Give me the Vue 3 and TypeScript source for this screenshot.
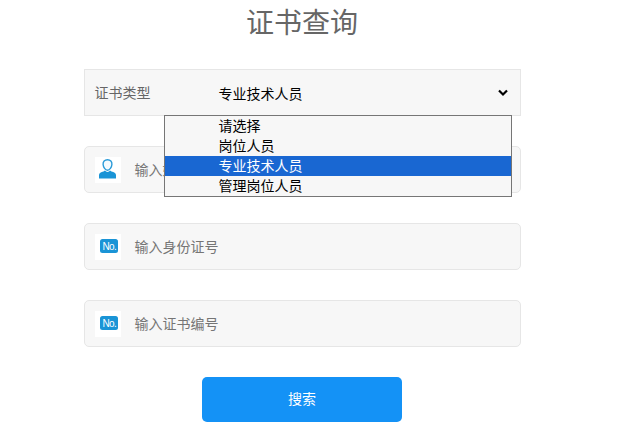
<script setup lang="ts">
import { ref } from 'vue'

interface Field {
  placeholder: string
  icon: 'user' | 'no'
}

const options = ref<string[]>(['请选择', '岗位人员', '专业技术人员', '管理岗位人员'])
const selected = ref<string>('专业技术人员')
const fields: Field[] = [
  { placeholder: '输入姓名', icon: 'user' },
  { placeholder: '输入身份证号', icon: 'no' },
  { placeholder: '输入证书编号', icon: 'no' },
]
</script>

<template>
  <div class="page">
    <h1 class="title">证书查询</h1>
    <div class="form">
      <div class="select-row">
        <span class="label">证书类型</span>
        <span class="value">{{ selected }}</span>
        <svg class="chevron" width="12" height="8" viewBox="0 0 12 8">
          <path d="M2 1.5 L6 5.5 L10 1.5" fill="none" stroke="#000" stroke-width="2.2" />
        </svg>
        <ul class="dropdown">
          <li v-for="o in options" :key="o" :class="{ active: o === selected }">{{ o }}</li>
        </ul>
      </div>
      <div v-for="f in fields" :key="f.placeholder" class="input-row">
        <span class="icon">
          <svg v-if="f.icon === 'user'" width="26" height="26" viewBox="0 0 26 26">
            <path d="M4 21.5 V18 C4 16 6 15.2 8.5 14.5 L10 13.5 C11 15.4 14 15.4 15 13.5 L16.5 14.5 C19 15.2 21 16 21 18 V21.5 Z" fill="#1a94d6" />
            <path d="M12.5 2.8 C9.6 2.8 7.9 4.7 8.1 7.5 C8.3 10.2 10.3 13.2 12.5 13.2 C14.7 13.2 16.7 10.2 16.9 7.5 C17.1 4.7 15.4 2.8 12.5 2.8 Z" fill="#f4fafd" stroke="#2a9ad8" stroke-width="1.4" />
          </svg>
          <svg v-else width="26" height="26" viewBox="0 0 26 26">
            <rect x="5" y="5" width="18" height="14" rx="2.5" fill="#1a94d6" />
            <text x="7.5" y="15.8" class="no-text">No.</text>
          </svg>
        </span>
        <span class="placeholder">{{ f.placeholder }}</span>
      </div>
    </div>
    <button class="search" type="button"><span>搜索</span></button>
  </div>
</template>

<style scoped>
.page {
  width: 604px;
  height: 445px;
  font-family: "Noto Sans CJK SC", "Noto Sans", sans-serif;
  display: flex;
  flex-direction: column;
  align-items: center;
  overflow: hidden;
}
.title {
  margin: 0;
  height: 69px;
  line-height: 43px;
  font-size: 28px;
  font-weight: 400;
  color: #666;
}
.form {
  width: 437px;
  display: flex;
  flex-direction: column;
  gap: 30px;
}
.select-row {
  position: relative;
  box-sizing: border-box;
  height: 47px;
  display: flex;
  align-items: center;
  background: #f7f7f7;
  border: 1px solid #e6e6e6;
  padding: 0 11px 0 10px;
  font-size: 14px;
}
.label {
  width: 124px;
  color: #666;
  line-height: 20px;
  padding-bottom: 1px;
}
.value {
  flex: 1;
  color: #000;
}
.chevron {
  display: block;
}
.dropdown {
  position: absolute;
  left: 79px;
  top: 45px;
  width: 348px;
  box-sizing: border-box;
  margin: 0;
  padding: 0;
  list-style: none;
  background: #f7f7f7;
  border: 1px solid #767676;
  z-index: 2;
}
.dropdown li {
  height: 20px;
  line-height: 18px;
  padding-left: 54px;
  color: #000;
}
.dropdown li.active {
  background: #1967d2;
  color: #fff;
}
.input-row {
  box-sizing: border-box;
  height: 47px;
  display: flex;
  align-items: center;
  background: #f7f7f7;
  border: 1px solid #e6e6e6;
  border-radius: 5px;
  padding-left: 10px;
}
.icon {
  width: 26px;
  height: 26px;
  background: #fff;
  display: block;
  margin-right: 14px;
}
.icon svg {
  display: block;
}
.no-text {
  font-family: "Liberation Sans", sans-serif;
  font-size: 10px;
  letter-spacing: -0.7px;
  fill: #fff;
}
.placeholder {
  font-size: 14px;
  line-height: 20px;
  padding-bottom: 2px;
  color: #757575;
}
.search {
  margin-top: 30px;
  width: 200px;
  height: 45px;
  border: 0;
  border-radius: 5px;
  background: #1492f6;
  color: #fff;
  font-family: inherit;
  font-size: 14px;
  padding: 0 0 3px;
}
</style>
